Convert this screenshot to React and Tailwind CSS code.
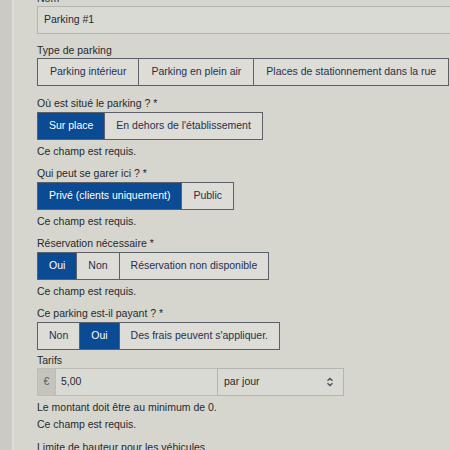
import React from "react";

const font = { fontFamily: "'Liberation Sans', Arial, sans-serif" };

function Segmented({ options, selected, pad = "px-[11px]" }) {
  return (
    <div className="flex w-fit border border-[#5b606b] bg-[#dddcd6]">
      {options.map((opt, i) => (
        <div
          key={opt}
          className={`h-[26px] whitespace-nowrap flex items-center justify-center ${pad} ${
            i > 0 ? "border-l border-[#5b606b]" : ""
          } ${
            opt === selected
              ? "bg-[#0b4b93] text-white"
              : "text-[#1f3150]"
          }`}
        >
          {opt}
        </div>
      ))}
    </div>
  );
}

function Field({ label, options, selected, error, gap = "mb-[2px]", pad }) {
  return (
    <div>
      <div className={`h-[14px] leading-[14px] text-[#26292e] ${gap}`}>{label}</div>
      <Segmented options={options} selected={selected} pad={pad} />
      {error && (
        <div className="h-[14px] leading-[14px] mt-[4px] text-[#26292e]">
          Ce champ est requis.
        </div>
      )}
    </div>
  );
}

export default function App() {
  return (
    <div
      className="w-[450px] h-[450px] overflow-hidden flex bg-[#d6d6cf] text-[10.5px]"
      style={font}
    >
      <div className="w-[14px] shrink-0 bg-[#cbcbc4] border-r-[2px] border-[#dedfd9]" />
      <div className="flex-1 min-w-0 pl-[23px] -mt-[8px]">
        <div className="h-[12px] leading-[12px] text-[#26292e]">Nom</div>
        <div className="h-[28px] mt-[2px] mr-[-20px] border border-[#b4b5b0] bg-[#dadad4] flex items-center pl-[6px] text-[#26292e]">
          Parking #1
        </div>

        <div className="mt-[9px]">
          <Field
            label="Type de parking"
            gap="mb-[1px]"
            pad="px-[12px]"
            options={["Parking intérieur", "Parking en plein air", "Places de stationnement dans la rue"]}
          />
        </div>

        <div className="mt-[10px] flex flex-col gap-[8px]">
          <Field
            label="Où est situé le parking ? *"
            options={["Sur place", "En dehors de l'établissement"]}
            selected="Sur place"
            error
          />
          <Field
            label="Qui peut se garer ici ? *"
            options={["Privé (clients uniquement)", "Public"]}
            selected="Privé (clients uniquement)"
            error
          />
          <Field
            label="Réservation nécessaire *"
            options={["Oui", "Non", "Réservation non disponible"]}
            selected="Oui"
            error
          />
          <Field
            label="Ce parking est-il payant ? *"
            options={["Non", "Oui", "Des frais peuvent s'appliquer."]}
            selected="Oui"
          />
        </div>

        <div className="mt-[3px] h-[14px] leading-[14px] text-[#26292e]">Tarifs</div>
        <div className="mt-[1px] flex h-[28px] w-[307px]">
          <div className="w-[19px] flex items-center justify-center bg-[#c4c4bd] border border-[#bdbdb6] text-[#5a5d62]">
            €
          </div>
          <div className="w-[161px] flex items-center pl-[5px] bg-[#dadad4] border-y border-[#bdbdb6] text-[#26292e]">
            5,00
          </div>
          <div className="flex-1 flex items-center justify-between pl-[6px] pr-[9px] bg-[#dadad4] border border-[#b4b5b0] text-[#26292e]">
            <span>par jour</span>
            <svg width="8" height="10" viewBox="0 0 8 10" fill="none" stroke="#4a4d52" strokeWidth="1.3">
              <path d="M1.5 3.8 L4 1.5 L6.5 3.8" />
              <path d="M1.5 6.2 L4 8.5 L6.5 6.2" />
            </svg>
          </div>
        </div>
        <div className="mt-[4px] h-[14px] leading-[14px] text-[#26292e]">
          Le montant doit être au minimum de 0.
        </div>
        <div className="mt-[3px] h-[14px] leading-[14px] text-[#26292e]">Ce champ est requis.</div>
        <div className="mt-[9px] h-[14px] leading-[14px] text-[#26292e]">
          Limite de hauteur pour les véhicules
        </div>
      </div>
    </div>
  );
}
